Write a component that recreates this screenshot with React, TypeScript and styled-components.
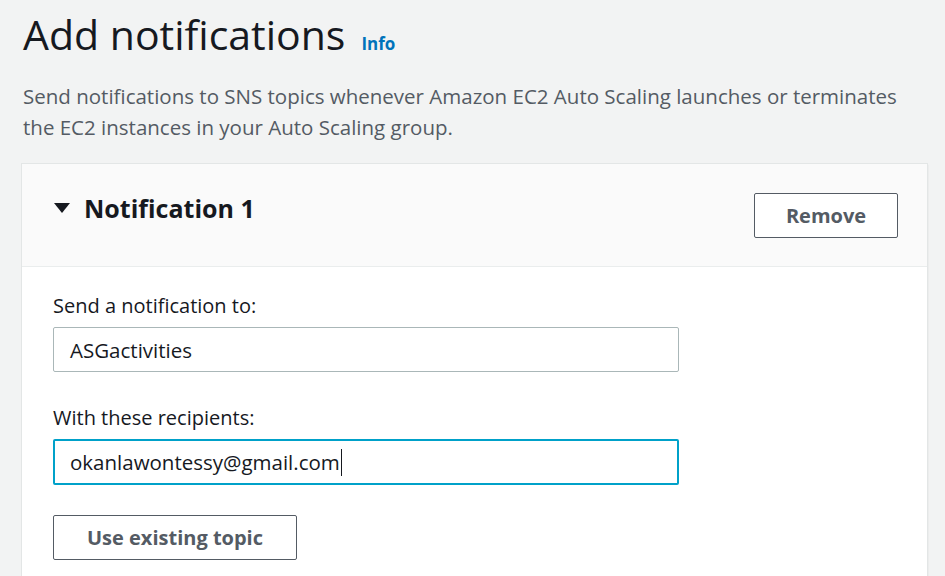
import React from 'react';
import styled, { createGlobalStyle } from 'styled-components';

const color = {
	bg: '#f2f3f3',
	text: '#16191f',
	muted: '#545b64',
	link: '#0073bb',
	border: '#aab7b8',
	focus: '#00a1c9',
	headerBg: '#fafafa',
	divider: '#eaeded',
};

const GlobalStyle = createGlobalStyle`
	html, body {
		margin: 0;
		padding: 0;
		background: ${color.bg};
	}
	body {
		font-family: "Open Sans", "Noto Sans", sans-serif;
		color: ${color.text};
	}
`;

const Page = styled.div`
	width: 945px;
	height: 576px;
	overflow: hidden;
	padding: 0 18px 0 22px;
	box-sizing: border-box;
`;

const TitleRow = styled.div`
	display: flex;
	align-items: baseline;
	gap: 16px;
	padding: 9px 0 0 1px;
	height: 60px;
	box-sizing: border-box;
`;

const Title = styled.h1`
	margin: 0;
	font-size: 41px;
	font-weight: 400;
	line-height: 50px;
	color: ${color.text};
`;

const InfoLink = styled.a`
	font-size: 17px;
	font-weight: 700;
	color: ${color.link};
	text-decoration: none;
`;

const Description = styled.p`
	margin: 21px 0 0 1px;
	font-size: 20.5px;
	line-height: 31px;
	color: ${color.muted};
	width: 897px;
`;

const Panel = styled.section`
	margin-top: 21px;
	background: #fff;
	box-shadow: 0 0 0 1px #e3e6e6, 1px 1px 1px rgba(0, 28, 36, 0.15);
`;

const PanelHeader = styled.header`
	display: flex;
	justify-content: space-between;
	align-items: flex-start;
	height: 103px;
	box-sizing: border-box;
	padding: 29px 29px 0 32px;
	background: ${color.headerBg};
	border-bottom: 1px solid ${color.divider};
`;

const HeaderTitle = styled.h2`
	display: flex;
	align-items: center;
	gap: 14px;
	margin: 0;
	font-size: 25px;
	font-weight: 700;
	line-height: 30px;
	color: ${color.text};
`;

const Caret = styled.svg`
	width: 16px;
	height: 10px;
	flex: none;
`;

const Button = styled.button<{ $width: number }>`
	width: ${(p) => p.$width}px;
	height: 45px;
	padding: 0;
	border: 1px solid ${color.muted};
	border-radius: 2px;
	background: #fff;
	font-family: inherit;
	font-size: 20px;
	font-weight: 700;
	color: ${color.muted};
	cursor: pointer;
`;

const PanelBody = styled.div`
	display: flex;
	flex-direction: column;
	align-items: flex-start;
	padding: 26px 31px 20px;
`;

const Field = styled.div`
	display: flex;
	flex-direction: column;
	margin-bottom: 30px;

	& + & {
		margin-top: 3px;
	}
`;

const Label = styled.label`
	font-size: 20px;
	line-height: 26px;
	margin-bottom: 8px;
	color: ${color.text};
`;

const Input = styled.div<{ $focused?: boolean }>`
	display: flex;
	align-items: center;
	width: 626px;
	height: ${(p) => (p.$focused ? '46px' : '45px')};
	box-sizing: border-box;
	padding: 0 ${(p) => (p.$focused ? '15px' : '16px')};
	border: ${(p) => (p.$focused ? `2px solid ${color.focus}` : `1px solid ${color.border}`)};
	border-radius: 2px;
	background: #fff;
	font-size: 20.5px;
	color: ${color.text};
`;

const Cursor = styled.span`
	display: inline-block;
	width: 1px;
	height: 27px;
	margin-left: 1px;
	background: ${color.text};
`;

export default function App() {
	return (
		<>
			<GlobalStyle />
			<Page>
				<TitleRow>
					<Title>Add notifications</Title>
					<InfoLink href="#">Info</InfoLink>
				</TitleRow>
				<Description>
					Send notifications to SNS topics whenever Amazon EC2 Auto Scaling launches or terminates
					the EC2 instances in your Auto Scaling group.
				</Description>
				<Panel>
					<PanelHeader>
						<HeaderTitle>
							<Caret viewBox="0 0 16 10">
								<path d="M0 0 H16 L8 10 Z" fill={color.text} />
							</Caret>
							Notification 1
						</HeaderTitle>
						<Button $width={144}>Remove</Button>
					</PanelHeader>
					<PanelBody>
						<Field>
							<Label>Send a notification to:</Label>
							<Input>ASGactivities</Input>
						</Field>
						<Field>
							<Label>With these recipients:</Label>
							<Input $focused>
								okanlawontessy@gmail.com
								<Cursor />
							</Input>
						</Field>
						<Button $width={244}>Use existing topic</Button>
					</PanelBody>
				</Panel>
			</Page>
		</>
	);
}
